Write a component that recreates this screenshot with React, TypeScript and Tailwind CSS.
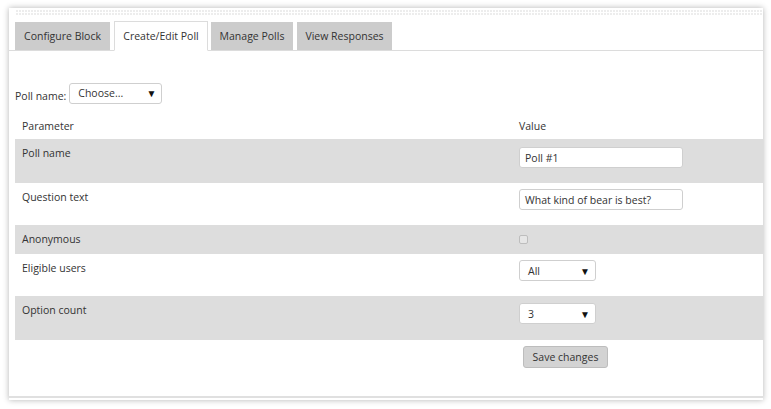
import React from "react";

const Select = ({ value, width }: { value: string; width: string }) => (
	<div className={`${width} h-[21px] flex items-center justify-between pl-[8px] pr-[5px] bg-white border border-[#cfcfcf] rounded-[3px]`}>
		<span>{value}</span>
		<span className="text-[10px] text-[#111]">▼</span>
	</div>
);

const TextInput = ({ value }: { value: string }) => (
	<div className="w-[164px] h-[21px] flex items-center pl-[5px] bg-white border border-[#cfcfcf] rounded-[3px]">{value}</div>
);

const rows = [
	{ label: "Poll name", h: "h-[44px]", grey: true, pt: "pt-[8px]", control: <TextInput value="Poll #1" /> },
	{ label: "Question text", h: "h-[42px]", grey: false, pt: "pt-[6px]", control: <TextInput value="What kind of bear is best?" /> },
	{
		label: "Anonymous",
		h: "h-[29px]",
		grey: true,
		pt: "pt-[10px]",
		control: <div className="w-[9px] h-[9px] border border-[#bdbdbd] bg-[#e6e6e6] rounded-[2px]" />,
	},
	{ label: "Eligible users", h: "h-[42px]", grey: false, pt: "pt-[6px]", control: <Select value="All" width="w-[77px]" /> },
	{ label: "Option count", h: "h-[44px]", grey: true, pt: "pt-[7px]", control: <Select value="3" width="w-[77px]" /> },
];

export default function App(): React.JSX.Element {
	return (
		<div className="min-h-[409px] bg-white pt-[8px] pl-[9px] font-['Open_Sans',sans-serif] text-[10.5px] leading-[16px] text-[#333]">
			<div className="w-[754px] h-[392px] bg-white shadow-[0_0_6px_rgba(0,0,0,0.3)] flex flex-col">
				{/* dotted strip */}
				<div className="mt-px ml-[6px] h-[7px] bg-[#ededed] bg-[linear-gradient(90deg,#fff_1px,transparent_1px),linear-gradient(#fff_1px,transparent_1px)] bg-[length:3px_3px]" />

				{/* tabs */}
				<div className="mt-[6px] h-[29px] flex items-end pl-[6px] border-b border-[#dcdcdc]">
					<div className="w-[95px] h-[28px] flex items-center justify-center bg-[#cccccc]">Configure Block</div>
					<div className="ml-[4px] w-[94px] h-[30px] -mb-px flex items-center justify-center bg-white border border-[#dcdcdc] border-b-white">
						Create/Edit Poll
					</div>
					<div className="ml-[3px] w-[82px] h-[28px] flex items-center justify-center bg-[#cccccc]">Manage Polls</div>
					<div className="ml-[4px] w-[95px] h-[28px] flex items-center justify-center bg-[#cccccc]">View Responses</div>
				</div>

				<div className="pl-[6px] flex-1 flex flex-col border-b-2 border-[#e0e0e0] mb-[2px]">
					{/* poll chooser */}
					<div className="mt-[31px] flex items-center">
						<span className="mr-[3px] mt-[6px]">Poll name:</span>
						<Select value="Choose..." width="w-[93px]" />
					</div>

					{/* table header */}
					<div className="mt-[11px] h-[24px] pt-[3px] grid grid-cols-[497px_1fr]">
						<div className="pl-[7px]">Parameter</div>
						<div className="pl-[7px]">Value</div>
					</div>

					{rows.map((r) => (
						<div key={r.label} className={`${r.h} grid grid-cols-[497px_1fr] ${r.grey ? "bg-[#dddddd]" : "bg-white"}`}>
							<div className="pl-[7px] pt-[6px]">{r.label}</div>
							<div className={`pl-[7px] ${r.pt}`}>{r.control}</div>
						</div>
					))}

					<div className="grid grid-cols-[497px_1fr] pt-[6px]">
						<div />
						<div className="pl-[11px]">
							<button className="w-[85px] h-[22px] bg-[#d3d3d3] border border-[#bdbdbd] rounded-[3px] text-[#333]">Save changes</button>
						</div>
					</div>
				</div>
			</div>
		</div>
	);
}
